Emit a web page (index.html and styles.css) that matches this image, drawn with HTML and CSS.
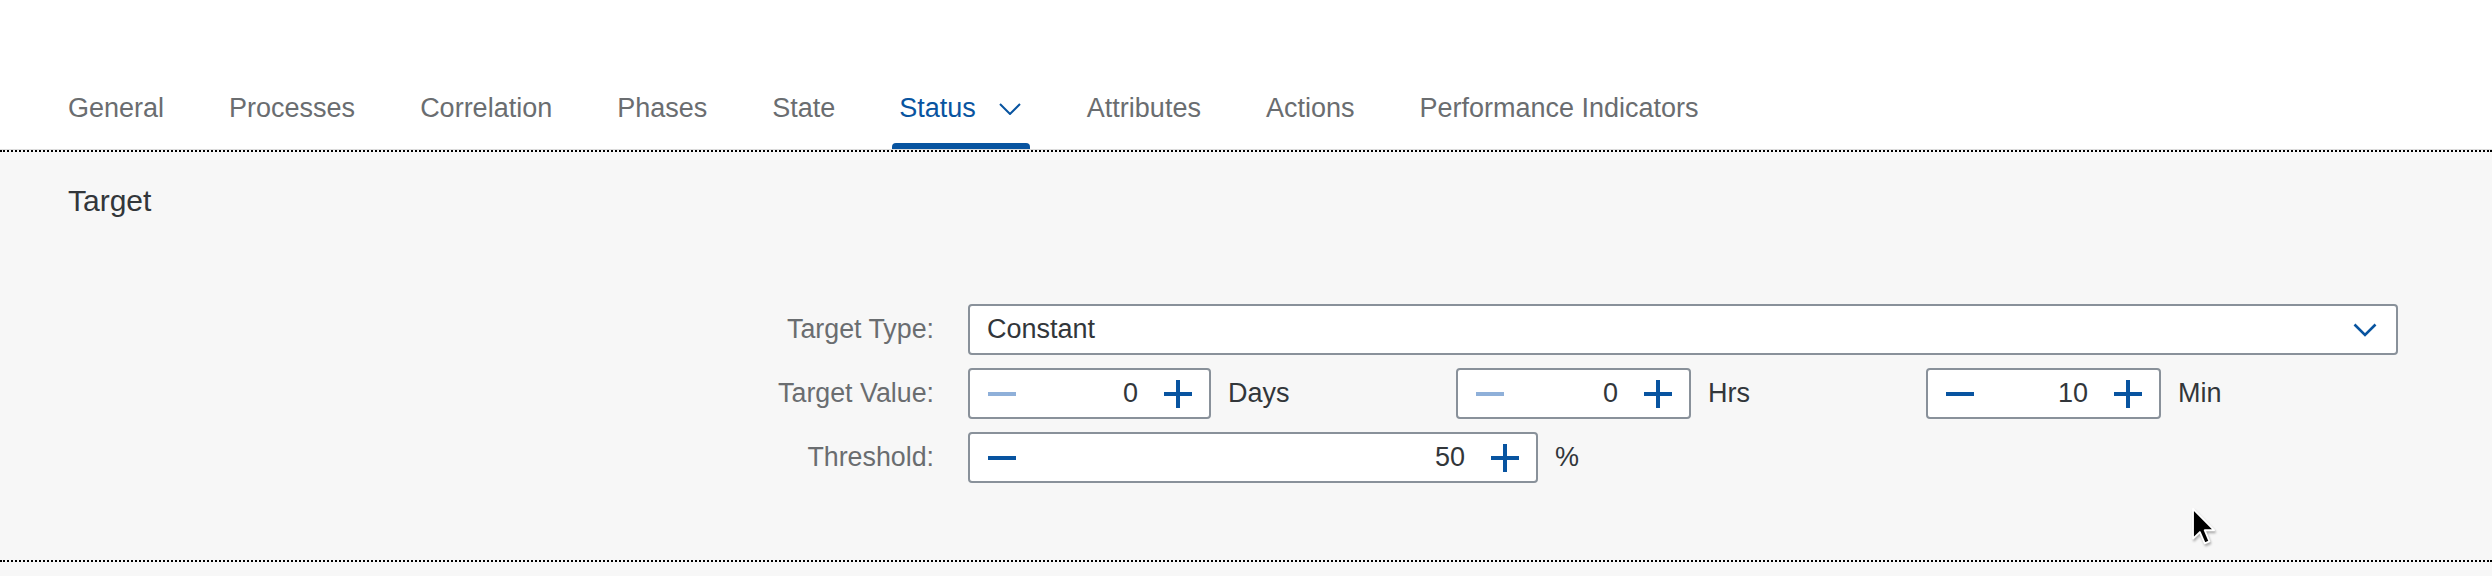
FILE: index.html
```html
<!DOCTYPE html>
<html lang="en">
<head>
<meta charset="utf-8">
<title>Status - Target</title>
<link rel="stylesheet" href="styles.css">
</head>
<body>
<div class="page">
  <nav class="tabbar">
    <div class="tab">General</div>
    <div class="tab">Processes</div>
    <div class="tab">Correlation</div>
    <div class="tab">Phases</div>
    <div class="tab">State</div>
    <div class="tab active">Status
      <svg class="tab-chevron" width="22" height="12" viewBox="0 0 22 12"><polyline points="1,1 11,11 21,1" fill="none" stroke="#0854a0" stroke-width="2"/></svg>
    </div>
    <div class="tab">Attributes</div>
    <div class="tab">Actions</div>
    <div class="tab">Performance Indicators</div>
  </nav>

  <section class="panel">
    <h2 class="panel-title">Target</h2>
    <div class="form">
      <label class="form-label">Target Type:</label>
      <div class="select">
        <span class="select-text">Constant</span>
        <svg class="select-chevron" width="24" height="14" viewBox="0 0 24 14"><polyline points="1.5,1.5 12,12 22.5,1.5" fill="none" stroke="#0854a0" stroke-width="2.6"/></svg>
      </div>

      <label class="form-label">Target Value:</label>
      <div class="value-row">
        <div class="unit-group">
          <div class="stepper stepper-days">
            <svg class="step-icon" width="28" height="28" viewBox="0 0 28 28"><rect x="0" y="12" width="28" height="4" fill="#8fb0d9"/></svg>
            <span class="step-value">0</span>
            <svg class="step-icon" width="28" height="28" viewBox="0 0 28 28"><rect x="0" y="12" width="28" height="4" fill="#0854a0"/><rect x="12" y="0" width="4" height="28" fill="#0854a0"/></svg>
          </div>
          <span class="unit">Days</span>
        </div>
        <div class="unit-group">
          <div class="stepper stepper-small">
            <svg class="step-icon" width="28" height="28" viewBox="0 0 28 28"><rect x="0" y="12" width="28" height="4" fill="#8fb0d9"/></svg>
            <span class="step-value">0</span>
            <svg class="step-icon" width="28" height="28" viewBox="0 0 28 28"><rect x="0" y="12" width="28" height="4" fill="#0854a0"/><rect x="12" y="0" width="4" height="28" fill="#0854a0"/></svg>
          </div>
          <span class="unit">Hrs</span>
        </div>
        <div class="unit-group">
          <div class="stepper stepper-small">
            <svg class="step-icon" width="28" height="28" viewBox="0 0 28 28"><rect x="0" y="12" width="28" height="4" fill="#0854a0"/></svg>
            <span class="step-value">10</span>
            <svg class="step-icon" width="28" height="28" viewBox="0 0 28 28"><rect x="0" y="12" width="28" height="4" fill="#0854a0"/><rect x="12" y="0" width="4" height="28" fill="#0854a0"/></svg>
          </div>
          <span class="unit">Min</span>
        </div>
      </div>

      <label class="form-label">Threshold:</label>
      <div class="unit-group">
        <div class="stepper stepper-wide">
          <svg class="step-icon" width="28" height="28" viewBox="0 0 28 28"><rect x="0" y="12" width="28" height="4" fill="#0854a0"/></svg>
          <span class="step-value">50</span>
          <svg class="step-icon" width="28" height="28" viewBox="0 0 28 28"><rect x="0" y="12" width="28" height="4" fill="#0854a0"/><rect x="12" y="0" width="4" height="28" fill="#0854a0"/></svg>
        </div>
        <span class="unit">%</span>
      </div>
    </div>
  </section>

  <svg class="cursor" width="26" height="40" viewBox="0 0 20 31">
    <path d="M1.5 1.5 L1.5 24.5 L6.8 19.4 L10.6 28.2 L14.2 26.7 L10.5 18 L17.8 18 Z" fill="#000" stroke="#fff" stroke-width="1.4" stroke-linejoin="round"/>
  </svg>
</div>
</body>
</html>
```

FILE: styles.css
```css
* { box-sizing: border-box; }

html, body {
  margin: 0;
  padding: 0;
  background: #f7f7f7;
  font-family: "Liberation Sans", Arial, sans-serif;
}

.page {
  position: relative;
  width: 2492px;
  height: 576px;
  overflow: hidden;
  background: #f7f7f7;
}

.tabbar {
  display: flex;
  gap: 49px;
  height: 150px;
  padding-left: 60px;
  background: #ffffff;
  box-shadow: inset 0 -1px 0 #dcdcdc;
}

.tab {
  position: relative;
  display: flex;
  align-items: flex-start;
  padding: 95px 8px 0;
  font-size: 27px;
  line-height: 27px;
  color: #6a6d70;
  white-space: nowrap;
}

.tab.active {
  color: #0854a0;
  padding-left: 7px;
  padding-right: 9px;
}

.tab.active::after {
  content: "";
  position: absolute;
  left: 0;
  right: 0;
  bottom: 1px;
  height: 6px;
  background: #0854a0;
  border-radius: 4px 4px 0 0;
}

.tab-chevron {
  margin-left: 23px;
  margin-top: 8px;
}

.panel {
  height: 412px;
  padding: 34px 0 0 68px;
  background: #f7f7f7;
  border-top: 2px dotted #000;
  border-bottom: 2px dotted #000;
}

.panel-title {
  margin: 0;
  font-size: 30px;
  line-height: 30px;
  font-weight: normal;
  color: #32363a;
}

.form {
  display: grid;
  grid-template-columns: 866px 1430px;
  column-gap: 34px;
  row-gap: 13px;
  grid-auto-rows: 51px;
  margin-top: 88px;
}

.form-label {
  display: flex;
  align-items: center;
  justify-content: flex-end;
  font-size: 26.8px;
  color: #6a6d70;
  white-space: nowrap;
}

.select {
  display: flex;
  align-items: center;
  justify-content: space-between;
  height: 51px;
  padding: 0 19px 0 17px;
  background: #ffffff;
  border: 2px solid #89919a;
  border-radius: 4px;
}

.select-text {
  font-size: 27px;
  color: #32363a;
}

.select-chevron {
  margin-top: 1px;
}

.value-row {
  display: grid;
  grid-template-columns: 488px 470px 1fr;
}

.unit-group {
  display: flex;
  align-items: center;
  gap: 17px;
}

.stepper {
  display: flex;
  align-items: center;
  height: 51px;
  padding: 0 17px 0 18px;
  background: #ffffff;
  border: 2px solid #89919a;
  border-radius: 4px;
}

.stepper-days { width: 243px; }
.stepper-small { width: 235px; }
.stepper-wide { width: 570px; }

.step-icon {
  flex: none;
}

.step-value {
  flex: 1;
  text-align: right;
  padding-right: 26px;
  font-size: 27px;
  color: #32363a;
}

.unit {
  font-size: 27px;
  color: #32363a;
}

.cursor {
  position: absolute;
  left: 2191px;
  top: 507px;
  filter: drop-shadow(1px 2px 1px rgba(0,0,0,0.3));
}
```
